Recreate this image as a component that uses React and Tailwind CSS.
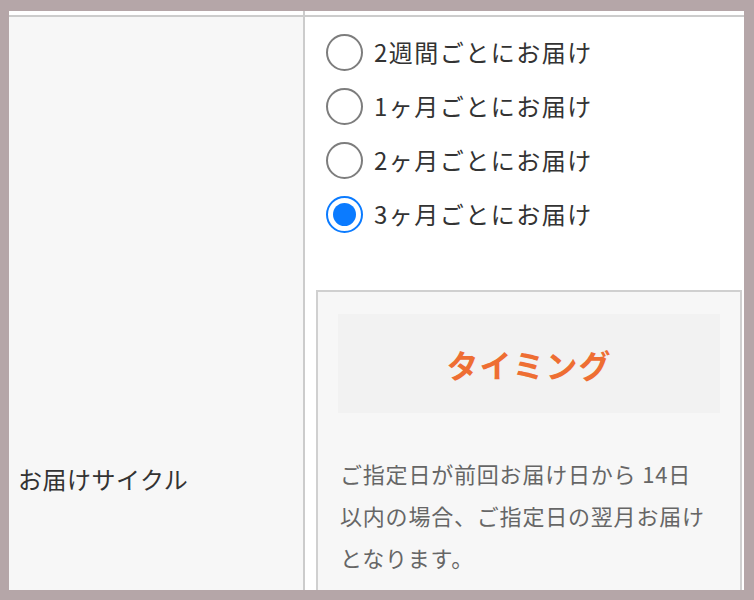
import React from 'react';

const font = { fontFamily: '"Noto Sans CJK JP", "Noto Sans", sans-serif' };

const options = [
  { label: '2週間ごとにお届け', checked: false },
  { label: '1ヶ月ごとにお届け', checked: false },
  { label: '2ヶ月ごとにお届け', checked: false },
  { label: '3ヶ月ごとにお届け', checked: true },
];

function Radio({ checked }) {
  if (checked) {
    return (
      <span className="flex h-[37px] w-[37px] shrink-0 items-center justify-center rounded-full border-2 border-[#0b7bff] bg-white">
        <span className="h-[23px] w-[23px] rounded-full bg-[#0b7bff]" />
      </span>
    );
  }
  return <span className="h-[37px] w-[37px] shrink-0 rounded-full border-2 border-[#7d7d7d] bg-white" />;
}

export default function App() {
  return (
    <div className="h-[600px] w-[754px] bg-[#b5a6a8] pt-[11px] pl-[9px] pr-[10px] pb-[10px]" style={font}>
      <div className="h-full w-full overflow-hidden bg-white">
        {/* tail of the previous row */}
        <div className="flex h-[4px]">
          <div className="w-[296px] border-r-2 border-[#cccccc] bg-white" />
          <div className="flex-1 bg-white" />
        </div>
        <div className="h-[2px] bg-[#cccccc]" />

        <div className="flex h-[924px]">
          <div className="flex w-[296px] items-center border-r-2 border-[#cccccc] bg-[#f7f7f7] pl-[9px]">
            <span className="text-[24px] tracking-[0.5px] text-[#333333]">お届けサイクル</span>
          </div>

          <div className="flex-1 bg-white pl-[11px] pr-[2px]">
            <div className="pt-[8px] pl-[10px]">
              {options.map((o) => (
                <label key={o.label} className="flex h-[54px] items-center gap-[11px]">
                  <Radio checked={o.checked} />
                  <span className="text-[24px] tracking-[1.5px] text-[#333333]">{o.label}</span>
                </label>
              ))}
            </div>

            <div className="mt-[49px] border-2 border-[#d0d0d0] bg-[#f7f7f7] px-[20px] pt-[22px] pb-[30px]">
              <div className="flex h-[99px] items-center justify-center bg-[#f2f2f2]">
                <span className="text-[32px] font-bold tracking-[1px] text-[#ee6e33]">タイミング</span>
              </div>
              <p className="mt-[39px] pl-[2px] text-[22px] leading-[42px] tracking-[0.8px] text-[#666666]">
                ご指定日が前回お届け日から 14日<br />
                以内の場合、ご指定日の翌月お届け<br />
                となります。
              </p>
            </div>
          </div>
        </div>
      </div>
    </div>
  );
}
